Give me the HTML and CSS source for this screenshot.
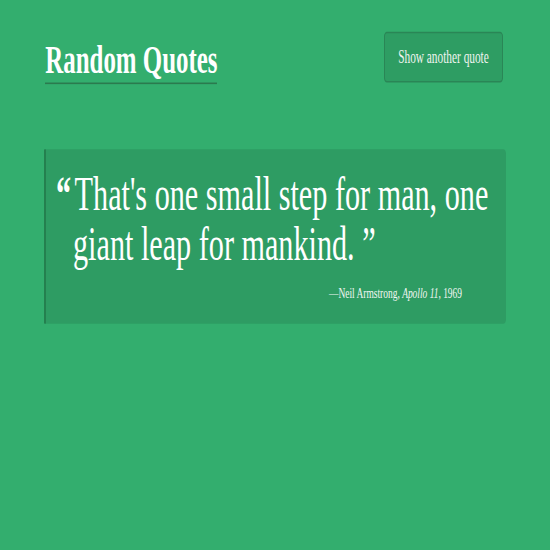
FILE: index.html
```html
<!DOCTYPE html>
<html lang="en">
<head>
<meta charset="utf-8">
<title>Random Quotes</title>
<link rel="stylesheet" href="styles.css">
</head>
<body>
<div class="page">
  <header class="top">
    <h1 class="title">Random Quotes</h1>
    <button class="next" type="button">Show another quote</button>
  </header>
  <blockquote class="quote">
    <p class="quote-text"><b class="mark">“</b>That's one small step for man, one giant leap for mankind. ”</p>
    <p class="source">—Neil Armstrong, <cite>Apollo 11</cite>, 1969</p>
  </blockquote>
</div>
</body>
</html>
```
FILE: styles.css
```css
html, body {
  margin: 0;
  height: 100%;
  overflow: hidden;
}
body {
  background: #33ae6e;
  font-family: "Liberation Serif", "Times New Roman", serif;
  color: #ffffff;
}
/* The reference uses a tall, condensed serif: the page is laid out at
   normal widths and stretched vertically to get that letter shape. */
.page {
  padding: 20.16px 44px 0;
  transform: scaleY(1.5873);
  transform-origin: 0 0;
}
.top {
  display: flex;
  justify-content: space-between;
  align-items: flex-start;
  padding-right: 3px;
}
.title {
  margin: 3.78px 0 0 1.3px;
  font-size: 24.9px;
  line-height: 27.72px;
  font-weight: 700;
  border-bottom: 1.89px solid #2b7a4e;
}
.next {
  width: 119px;
  height: 32.13px;
  padding: 0;
  background: #2e9d63;
  border: 1px solid #2a8656;
  border-radius: 3px;
  color: #eef4ef;
  font-family: inherit;
  font-size: 11.34px;
  line-height: 12.6px;
  white-space: nowrap;
}
.quote {
  margin: 40.95px 0 0;
  padding: 12.6px 6px 13.23px 27px;
  background: #2e9c63;
  border-left: 2px solid #24804f;
  border-radius: 0 3px 3px 0;
}
.quote-text {
  margin: 0;
  font-size: 30.2px;
  line-height: 32.13px;
  text-indent: -17px;
}
.mark {
  font-weight: 700;
  margin-right: 3.5px;
}
.source {
  margin: 8.19px 38px 0 0;
  text-align: right;
  font-size: 9.45px;
  line-height: 12.6px;
  color: #f2f7f3;
}
.source cite {
  font-style: italic;
}
```
